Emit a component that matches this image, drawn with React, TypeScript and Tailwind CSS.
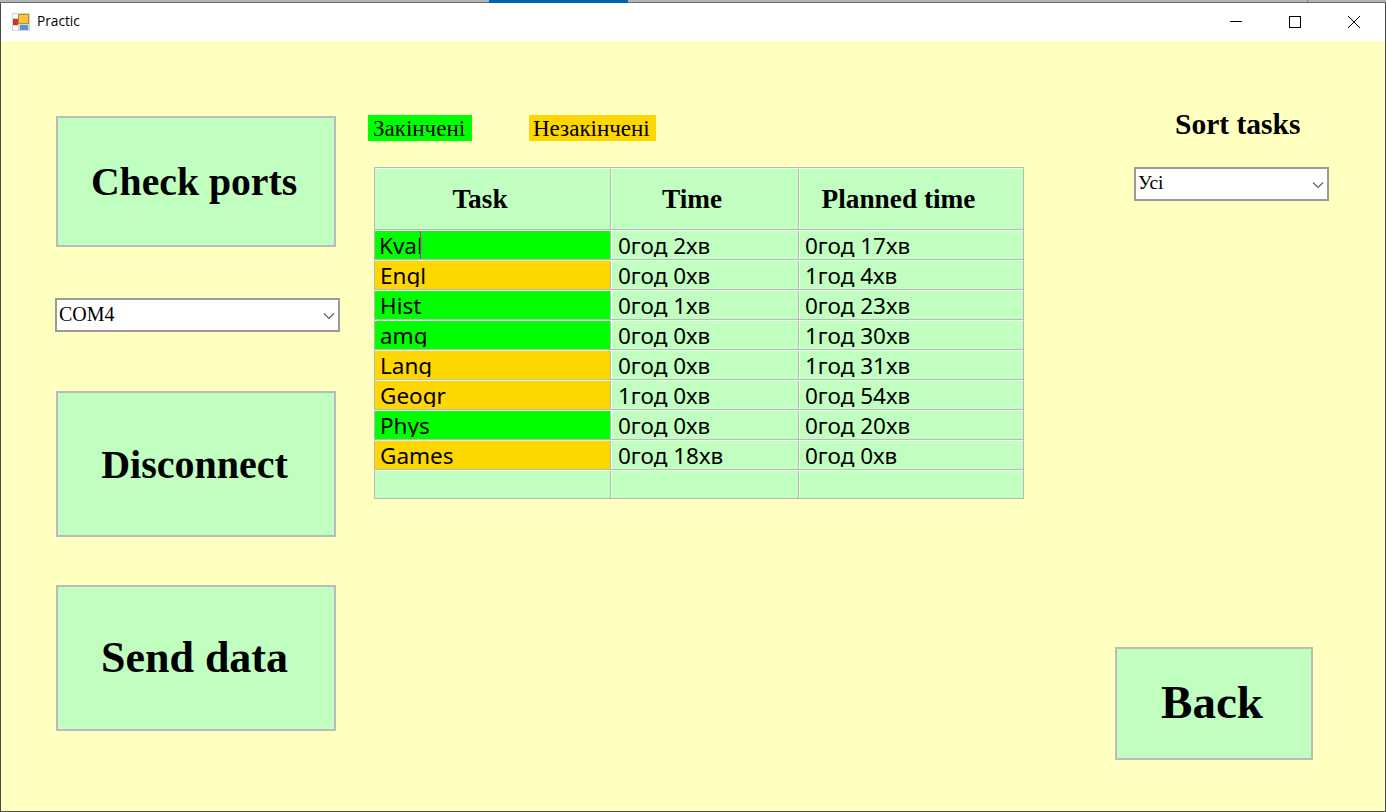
import React from 'react';

const serif = "font-['Liberation_Serif','Times_New_Roman',serif]";
const GREEN = 'bg-[#00ff00]';
const AMBER = 'bg-[#ffd700]';

const rows = [
  { task: 'Kval', time: '0год 2хв', planned: '0год 17хв', color: GREEN, active: true },
  { task: 'Engl', time: '0год 0хв', planned: '1год 4хв', color: AMBER },
  { task: 'Hist', time: '0год 1хв', planned: '0год 23хв', color: GREEN },
  { task: 'amg', time: '0год 0хв', planned: '1год 30хв', color: GREEN },
  { task: 'Lang', time: '0год 0хв', planned: '1год 31хв', color: AMBER },
  { task: 'Geogr', time: '1год 0хв', planned: '0год 54хв', color: AMBER },
  { task: 'Phys', time: '0год 0хв', planned: '0год 20хв', color: GREEN },
  { task: 'Games', time: '0год 18хв', planned: '0год 0хв', color: AMBER },
];

function AppIcon() {
  return (
    <svg width="18" height="18" viewBox="0 0 18 18">
      <rect width="18" height="18" fill="#d4d4d4" />
      <rect x="1" y="1" width="5" height="4" fill="#ffffff" />
      <rect x="1" y="13" width="5" height="4" fill="#ffffff" />
      <rect x="6.5" y="1.5" width="10" height="9" fill="#f5c242" stroke="#c08a20" strokeWidth="1" />
      <rect x="1" y="6" width="5" height="6" fill="#c0392b" />
      <rect x="8" y="12" width="8" height="5" fill="#5b8fd9" />
    </svg>
  );
}

function TitleBar() {
  return (
    <div className="flex h-[38px] shrink-0 items-center bg-white">
      <div className="ml-[11px]">
        <AppIcon />
      </div>
      <span className="ml-[7px] pb-[2px] font-['Open_Sans',sans-serif] text-[13.7px] text-black">Practic</span>
      <div className="ml-auto flex items-center">
        <svg width="46" height="38" viewBox="0 0 46 38" className="mr-[13px]">
          <path d="M17 18.5h12" stroke="#000" strokeWidth="1" />
        </svg>
        <svg width="46" height="38" viewBox="0 0 46 38" className="mr-[13px]">
          <rect x="17.5" y="13.5" width="11" height="11" fill="none" stroke="#000" strokeWidth="1" />
        </svg>
        <svg width="46" height="38" viewBox="0 0 46 38" className="mr-[8px]">
          <path d="M17 13l12 12M29 13L17 25" stroke="#000" strokeWidth="1" />
        </svg>
      </div>
    </div>
  );
}

function BigButton({ label, className }: { label: string; className: string }) {
  return (
    <button className={`flex items-center justify-center border-2 border-[#bcbcbc] bg-[#c0ffc0] font-bold text-black ${serif} ${className}`}>
      {label}
    </button>
  );
}

function Dropdown({ value, className }: { value: string; className: string }) {
  return (
    <div className={`flex items-center justify-between border-2 border-[#9a9a9a] bg-white text-black ${serif} ${className}`}>
      <span className="pb-[2px]">{value}</span>
      <svg width="12" height="8" viewBox="0 0 12 8" className="mr-[3px] mt-[2px]">
        <path d="M1 1.5l5 5 5-5" fill="none" stroke="#606060" strokeWidth="1.2" />
      </svg>
    </div>
  );
}

function HeaderCell({ label, className }: { label: string; className: string }) {
  return (
    <div className={`flex h-[60px] items-center justify-center pt-[2px] text-[27.3px] font-bold leading-none ${serif} ${className}`}>
      {label}
    </div>
  );
}

// Text box is shorter than the row, so descenders get cut like in the WinForms grid
function CellText({ children }: { children: React.ReactNode }) {
  return <span className="block h-[26px] overflow-hidden">{children}</span>;
}

function TaskTable() {
  const cell = "h-full font-['Noto_Sans',sans-serif] text-[22.5px] leading-[29px] text-black";
  const grid = 'grid grid-cols-[236px_188px_1fr]';
  return (
    <div className="ml-[6px] mt-[26px] w-[650px] border border-[#b9b9b9] bg-[#c0ffc0]">
      <div className={`${grid} border-y border-b-[#b9b9b9] border-t-[#e8ffe8]`}>
        <HeaderCell label="Task" className="border-r border-[#b9b9b9] pr-[25px]" />
        <HeaderCell label="Time" className="border-l border-r border-l-[#e8ffe8] border-r-[#b9b9b9] pr-[26px]" />
        <HeaderCell label="Planned time" className="border-l border-[#e8ffe8] pr-[26px]" />
      </div>
      {rows.map((row) => (
        <div key={row.task} className={`${grid} h-[30px] border-y border-b-[#b9b9b9] border-t-[#e8ffe8]`}>
          <div className={`relative ${cell} ${row.color} border-r border-[#b9b9b9] ${row.active ? 'pl-[4px]' : 'pl-[5px]'}`}>
            <CellText>{row.task}</CellText>
            {row.active && <span className="absolute left-[45px] top-0 h-[28px] w-px bg-[#c020c0]" />}
          </div>
          <div className={`${cell} border-l border-r border-l-[#e8ffe8] border-r-[#b9b9b9] pl-[6px]`}>
            <CellText>{row.time}</CellText>
          </div>
          <div className={`${cell} border-l border-[#e8ffe8] pl-[5px]`}>
            <CellText>{row.planned}</CellText>
          </div>
        </div>
      ))}
      <div className={`${grid} h-[28px] border-t border-[#e8ffe8]`}>
        <div className={`${cell} border-r border-[#b9b9b9]`} />
        <div className={`${cell} border-l border-r border-l-[#e8ffe8] border-r-[#b9b9b9]`} />
        <div className={`${cell} border-l border-[#e8ffe8]`} />
      </div>
    </div>
  );
}

export default function App() {
  return (
    <div className="flex h-[812px] w-[1386px] flex-col overflow-hidden bg-white">
      {/* strip of whatever window sits behind */}
      <div className="flex h-[3px] shrink-0 border-b border-[#6a6a6a] bg-[#b4b4b4]">
        <div className="ml-[489px] h-[3px] w-[139px] bg-[#0063b1]" />
        <div className="ml-[679px] w-px bg-[#808080]" />
      </div>
      <div className="flex min-h-0 flex-1 flex-col border-x border-b border-[#4a4a4a]">
        <TitleBar />
        <div className="flex min-h-0 flex-1 bg-[#ffffc0]">
          {/* left column */}
          <div className="flex w-[367px] shrink-0 flex-col pt-[75px]">
            <BigButton label="Check ports" className="ml-[55px] h-[131px] w-[280px] pr-[4px] pt-[2px] text-[39.7px]" />
            <Dropdown value="COM4" className="ml-[54px] mt-[51px] h-[34px] w-[285px] pl-[2px] text-[20px]" />
            <BigButton label="Disconnect" className="ml-[55px] mt-[59px] h-[146px] w-[280px] pr-[3px] pt-[2px] text-[40px]" />
            <BigButton label="Send data" className="ml-[55px] mt-[48px] h-[146px] w-[280px] pr-[3px] text-[44px]" />
          </div>

          {/* middle column */}
          <div className="w-[700px] shrink-0 pt-[74px]">
            <div className={`flex h-[26px] items-center text-[23px] leading-none text-black ${serif}`}>
              <span className={`flex h-[26px] w-[104px] items-center pl-[5px] ${GREEN}`}>Закінчені</span>
              <span className={`ml-[57px] flex h-[26px] w-[127px] items-center pl-[4px] ${AMBER}`}>Незакінчені</span>
            </div>
            <TaskTable />
          </div>

          {/* right column */}
          <div className="flex flex-1 flex-col pt-[65px]">
            <div className={`ml-[107px] text-[29.5px] font-bold leading-[36px] text-black ${serif}`}>Sort tasks</div>
            <Dropdown value="Усі" className="ml-[66px] mt-[25px] h-[34px] w-[195px] pl-[2px] text-[19.5px]" />
            <BigButton label="Back" className="ml-[47px] mt-[446px] h-[113px] w-[198px] pb-[2px] pr-[4px] text-[47px]" />
          </div>
        </div>
      </div>
    </div>
  );
}
